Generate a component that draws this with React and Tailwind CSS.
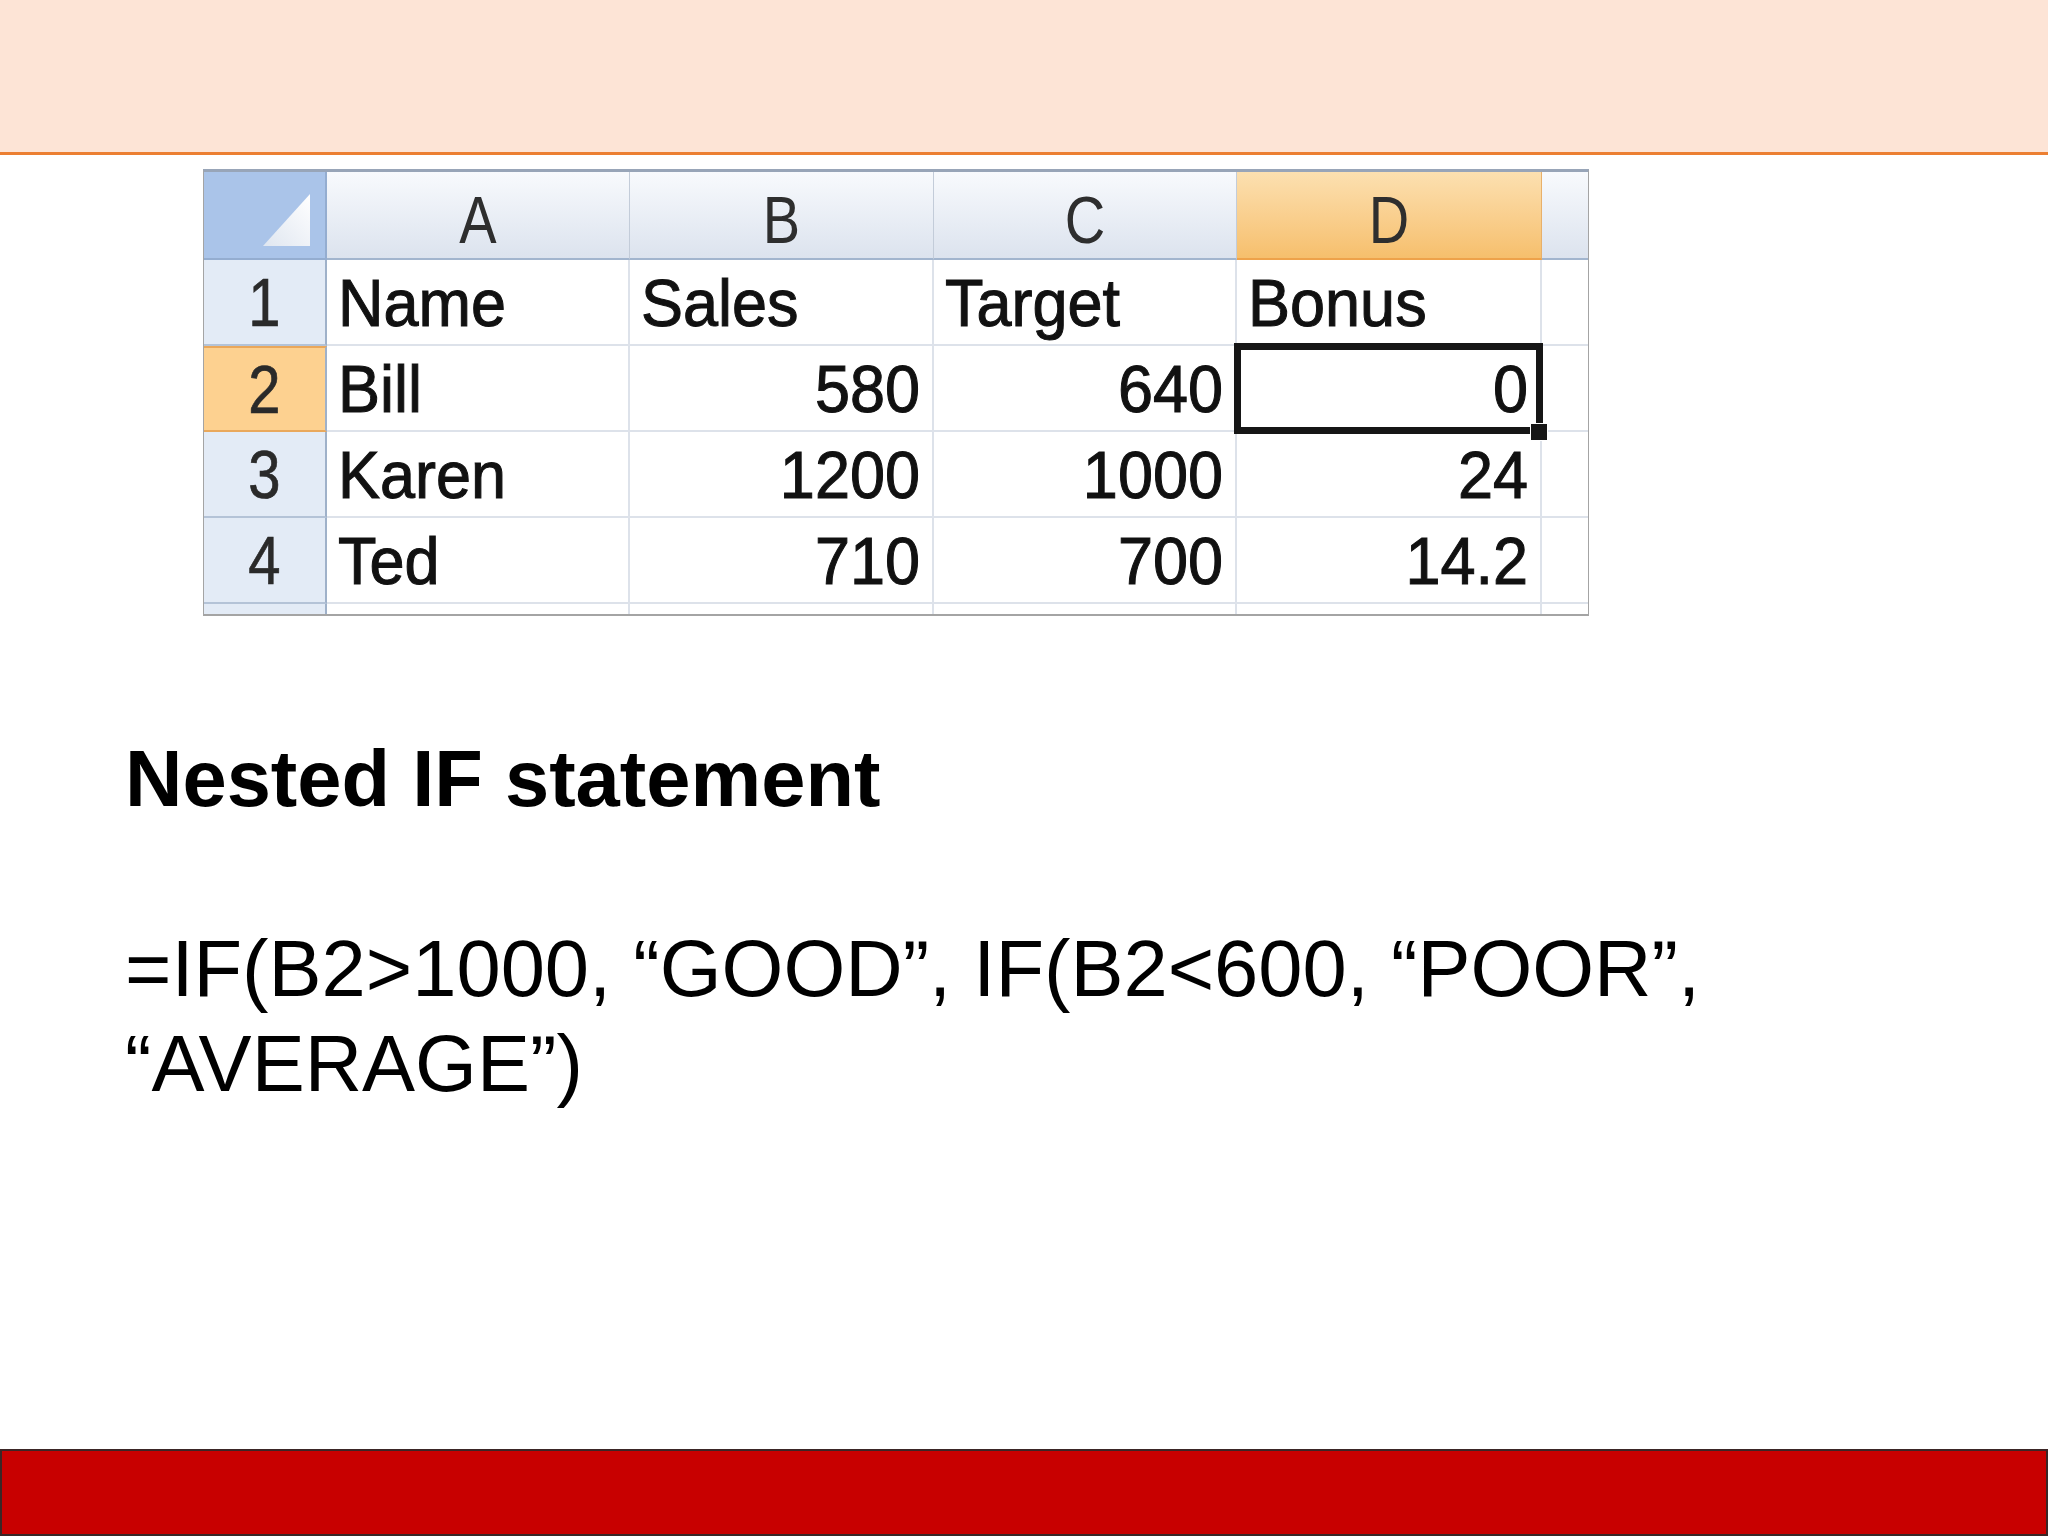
import React from 'react';

const COLS = [
  { key: 'A', w: 'w-[303px]' },
  { key: 'B', w: 'w-[304px]' },
  { key: 'C', w: 'w-[303px]' },
  { key: 'D', w: 'w-[305px]', active: true },
];

const ROWS = [
  ['Name', 'Sales', 'Target', 'Bonus'],
  ['Bill', 580, 640, 0],
  ['Karen', 1200, 1000, 24],
  ['Ted', 710, 700, 14.2],
];

function CornerCell() {
  return (
    <div className="w-[123px] h-full bg-[#aac4e9] border-r-2 border-b-2 border-[#94add0] relative">
      <svg width="121" height="86" className="absolute left-0 top-0">
        <defs>
          <linearGradient id="tri" x1="0" y1="1" x2="1" y2="0">
            <stop offset="0" stopColor="#dfe6f0" />
            <stop offset="1" stopColor="#ffffff" />
          </linearGradient>
        </defs>
        <polygon points="59,74 106,22 106,74" fill="url(#tri)" />
      </svg>
    </div>
  );
}

function ColHeader({ col }) {
  const base = 'h-full flex items-center justify-center pt-[10px] text-[56px] text-[#2e2e2e] border-r border-b-2';
  const skin = col.active
    ? 'bg-linear-to-b from-[#fce0b0] to-[#f6bf6c] border-r-[#e8b06a] border-b-[#eea24a]'
    : 'bg-linear-to-b from-[#f8fafd] to-[#dce3ee] border-r-[#c3ccd9] border-b-[#a2b5ce]';
  return (
    <div className={`${col.w} ${base} ${skin}`}>
      <span className="inline-block scale-y-[1.2] leading-none">{col.key}</span>
    </div>
  );
}

function RowHeader({ n, active }) {
  const skin = active
    ? 'bg-[#fdd190] border-b-[#e9a85c] border-t-2 border-t-[#eaa75a]'
    : 'bg-[#e3ebf6] border-b-[#b4c3d7]';
  return (
    <div className={`w-[123px] h-full flex items-center justify-center text-[58px] text-[#2a2a2a] border-r-2 border-r-[#9fb1c9] border-b-2 ${skin}`}>
      <span className="inline-block scale-y-[1.18] leading-none [-webkit-text-stroke:0.6px_#2a2a2a]">{n}</span>
    </div>
  );
}

function Cell({ col, value, selected }) {
  const numeric = typeof value === 'number';
  return (
    <div
      className={`${col.w} h-full relative flex items-center bg-white border-r-2 border-b-2 border-[#dde2ea] text-[63px] text-[#111] ${
        numeric ? 'justify-end pr-[12px]' : 'justify-start pl-[11px]'
      }`}
    >
      <span className="inline-block scale-y-[1.07] leading-none [-webkit-text-stroke:1px_#111]">{value}</span>
      {selected && (
        <>
          <div className="absolute z-10 -left-[3px] -top-[3px] -right-[3px] -bottom-[4px] border-[7px] border-[#161616]" />
          <div className="absolute z-20 -right-[8px] -bottom-[11px] w-[18px] h-[18px] bg-[#161616] border border-white" />
        </>
      )}
    </div>
  );
}

function Sheet() {
  return (
    <div className="ml-[203px] mt-[14px] w-[1386px] border-t-[3px] border-t-[#98a5b8] border-x border-x-[#a4a4a4] border-b-2 border-b-[#a4a4a4] font-['Liberation_Sans',Arial,sans-serif]">
      <div className="flex h-[88px]">
        <CornerCell />
        {COLS.map(c => (
          <ColHeader key={c.key} col={c} />
        ))}
        <div className="flex-1 h-full bg-linear-to-b from-[#f8fafd] to-[#dce3ee] border-b-2 border-b-[#a2b5ce]" />
      </div>

      {ROWS.map((row, i) => (
        <div key={i} className="flex h-[86px]">
          <RowHeader n={i + 1} active={i === 1} />
          {COLS.map((c, j) => (
            <Cell key={c.key} col={c} value={row[j]} selected={i === 1 && c.key === 'D'} />
          ))}
          <div className="flex-1 h-full bg-white border-b-2 border-[#dde2ea]" />
        </div>
      ))}

      {/* cut-off row 5 */}
      <div className="flex h-[10px]">
        <div className="w-[123px] h-full bg-[#e3ebf6] border-r-2 border-r-[#9fb1c9]" />
        {COLS.map(c => (
          <div key={c.key} className={`${c.w} h-full bg-white border-r-2 border-[#dde2ea]`} />
        ))}
        <div className="flex-1 h-full bg-white" />
      </div>
    </div>
  );
}

export default function App() {
  return (
    <div className="w-[2048px] h-[1536px] flex flex-col bg-white overflow-hidden font-['Liberation_Sans',Arial,sans-serif]">
      {/* Title band */}
      <div className="h-[155px] shrink-0 bg-[#fde4d6] border-b-[3px] border-[#ec7f32]" />

      <Sheet />

      {/* Slide text */}
      <div className="mt-[115px] pl-[125px] w-[1880px] text-black text-[79.5px] leading-[95px]">
        <p className="font-bold">Nested IF statement</p>
        <p className="mt-[95px] w-[1760px]">
          =IF(B2&gt;1000, “GOOD”, IF(B2&lt;600, “POOR”, “AVERAGE”)
        </p>
      </div>

      {/* Footer bar */}
      <div className="mt-auto h-[87px] shrink-0 bg-[#c80000] border-2 border-[#3b2626]" />
    </div>
  );
}
